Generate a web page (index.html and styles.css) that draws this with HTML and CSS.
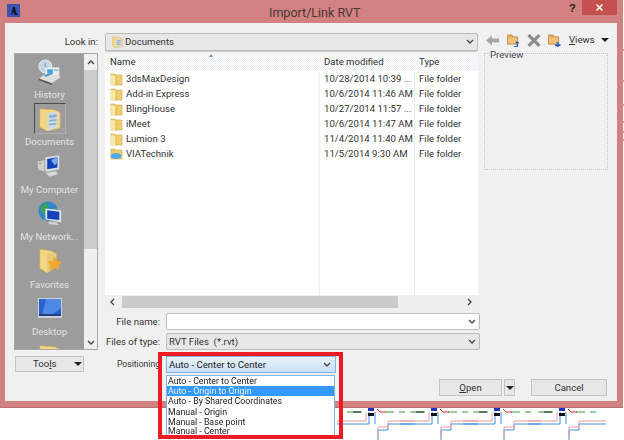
FILE: index.html
```html
<!DOCTYPE html>
<html lang="en">
<head>
<meta charset="utf-8">
<title>Import/Link RVT</title>
<link rel="stylesheet" href="styles.css">
</head>
<body>
<svg class="defs" width="0" height="0">
  <defs>
    <symbol id="folder" viewBox="0 0 13 14">
      <path d="M1 2h4l1 1h6v10H1z" fill="#f0cd6e" stroke="#c9a445" stroke-width=".6"/>
      <path d="M1 3l5 1v9.600L1 13z" fill="#fbe7a6"/>
      <path d="M6 4v9.600" stroke="#d2a94a" stroke-width=".8"/>
    </symbol>
    <symbol id="netfolder" viewBox="0 0 13 14">
      <path d="M1 2h4l1 1h6v9H1z" fill="#f0cd6e" stroke="#c9a445" stroke-width=".6"/>
      <ellipse cx="6" cy="9" rx="5.500" ry="3" fill="#53a9ee"/>
    </symbol>
    <symbol id="docfolder" viewBox="0 0 28 28">
      <path d="M3 3l16 1 6 3v17l-14 3-8-4z" fill="#f3d684" stroke="#c9a445" stroke-width=".6"/>
      <path d="M11 7l12-1v17l-12 4z" fill="#d9d9d0"/>
      <path d="M13 10l8-1v3l-8 1zM13 15l8-1v2l-8 1zM13 19l8-1v2l-8 1z" fill="#7fb4d8"/>
    </symbol>
    <symbol id="favfolder" viewBox="0 0 28 28">
      <path d="M3 1l12 2 6 3v14l-10 7-8-5z" fill="#f3d684" stroke="#c9a445" stroke-width=".6"/>
      <path d="M11 6l9 0v14l-9 7z" fill="#e2c878"/>
      <path d="M19 9l2.500 5 5.500 .8-4 3.800 1 5.400-5-2.600-5 2.600 1-5.400-4-3.800 5.500-.8z" fill="#f0a92a"/>
    </symbol>
    <symbol id="monitor" viewBox="0 0 28 24">
      <path d="M9 2l15-2v15l-15 3z" fill="#d8dde2"/>
      <path d="M11 4l11-2v11l-11 2z" fill="#1140b8"/>
      <path d="M15 5l7-3v6l-3 3z" fill="#7fa8e8"/>
      <path d="M1 7l7-2v12l-7-2z" fill="#cfd3cc"/>
      <path d="M2 8h3v1H2z" fill="#63a650"/>
      <path d="M9 19l11-2 3 3-9 3z" fill="#d7d7d7"/>
    </symbol>
    <symbol id="history" viewBox="0 0 28 28">
      <circle cx="9" cy="8" r="7" fill="#c4d6df" stroke="#e5eef2"/>
      <path d="M9 4v4l3 2" stroke="#7d8f98" fill="none"/>
      <path d="M9 9h15v9H9z" fill="#e8eef0"/>
      <path d="M11 11h6v5h-6z" fill="#4aa3d8"/>
      <path d="M18 11h5v2h-5z" fill="#8cc5e2"/>
      <path d="M2 21l9-6 15 4-10 7z" fill="#dedede"/>
      <path d="M2 21l14 5v2L2 23z" fill="#5a5a5a"/>
      <path d="M7 18l7-3 3 1-7 3z" fill="#3a9ad6"/>
    </symbol>
    <symbol id="network" viewBox="0 0 28 28">
      <circle cx="12" cy="11" r="10.500" fill="#2f86c8"/>
      <path d="M4 6l6-4 3 3-3 4 2 4-3 2-5-4zM15 9l4-2 3 5-3 5-3-3z" fill="#3aa35a"/>
      <path d="M9 8l17 2v13L9 20z" fill="#dfe4e8"/>
      <path d="M11 10l13 1.500v9L11 19z" fill="#1642b8"/>
      <path d="M12 22l9 1 3 3-11-1z" fill="#cfd3d6"/>
    </symbol>
    <symbol id="desktop" viewBox="0 0 24 20">
      <path d="M0 0h24v20H0z" fill="#c9d2db"/>
      <path d="M1 1h22v17H1z" fill="#2a63d0"/>
      <path d="M8 1h15v9l-11 8H4z" fill="#4d8ae6"/>
      <path d="M1 16h22v2H1z" fill="#243f86"/>
    </symbol>
    <symbol id="tbup" viewBox="0 0 14 14">
      <path d="M1 1h5l1 2h5v8H1z" fill="#e2a952" stroke="#a8793a" stroke-width=".6"/>
      <path d="M2 4h9v6H2z" fill="#f0c27c"/>
      <path d="M8 13h3V10H9l2.500-2.500L14 10h-1.500v4H8z" fill="#2a5fc4"/>
    </symbol>
    <symbol id="tbnew" viewBox="0 0 14 14">
      <path d="M1 1h5l1 2h5v8H1z" fill="#e2a952" stroke="#a8793a" stroke-width=".6"/>
      <path d="M2 4h9v6H2z" fill="#f0c27c"/>
      <path d="M10 9h2v2h2v2h-2v1h-2v-1H8v-2h2z" fill="#2a5fc4"/>
    </symbol>
    <symbol id="chev" viewBox="0 0 8 6">
      <path d="M1 1l3 3 3-3" fill="none" stroke="#444" stroke-width="1.300"/>
    </symbol>
  </defs>
</svg>

<div class="page">
  <div class="window">
    <header class="titlebar">
      <svg class="app-icon" viewBox="0 0 13 13"><rect width="13" height="13" fill="#3a55b0"/><path d="M4 11l2-8h2l1 5 2 3H8L6 8l-1 3z" fill="#101830"/></svg>
      <span class="title">Import/Link RVT</span>
      <span class="help">?</span>
      <span class="close"><svg class="close-x" viewBox="0 0 7 7"><path d="M.5 .5l6 6M6.500 .5l-6 6" stroke="#fff" stroke-width="1.500"/></svg></span>
    </header>

    <div class="client">
      <div class="lookin-label">Look in:</div>
      <div class="combo lookin">
        <svg class="combo-icon"><use href="#docfolder"/></svg>
        <span class="combo-text">Documents</span>
        <svg class="chev"><use href="#chev"/></svg>
      </div>
      <div class="toolbar">
        <svg class="tb-icon" viewBox="0 0 14 12"><path d="M0 6l6-5v3h7v4H6v3z" fill="#a6a6a6"/></svg>
        <svg class="tb-icon tb-gap"><use href="#tbup"/></svg>
        <svg class="tb-icon tb-gap2" viewBox="0 0 12 12"><path d="M1 1l10 10M11 1L1 11" stroke="#8c8c8c" stroke-width="3"/></svg>
        <svg class="tb-icon tb-gap"><use href="#tbnew"/></svg>
        <span class="views"><u>V</u>iews</span>
        <span class="caret"></span>
      </div>

      <nav class="sidebar">
        <div class="places">
          <div class="place"><div class="place-icon"><svg class="ico-l"><use href="#history"/></svg></div><span>History</span></div>
          <div class="place"><div class="place-icon selected"><svg class="ico-l"><use href="#docfolder"/></svg></div><span>Documents</span></div>
          <div class="place"><div class="place-icon"><svg class="ico-m"><use href="#monitor"/></svg></div><span>My Computer</span></div>
          <div class="place"><div class="place-icon"><svg class="ico-l"><use href="#network"/></svg></div><span>My Network...</span></div>
          <div class="place"><div class="place-icon"><svg class="ico-l"><use href="#favfolder"/></svg></div><span>Favorites</span></div>
          <div class="place"><div class="place-icon"><svg class="ico-d"><use href="#desktop"/></svg></div><span>Desktop</span></div>
          <div class="place"><div class="place-icon"><svg class="ico-l"><use href="#docfolder"/></svg></div></div>
        </div>
        <div class="vscroll">
          <svg class="chev up"><use href="#chev"/></svg>
          <div class="vthumb"></div>
          <svg class="chev"><use href="#chev"/></svg>
        </div>
      </nav>

      <main class="center">
        <div class="list">
          <div class="row head">
            <span class="c-name">Name</span><span class="c-date">Date modified</span><span class="c-type">Type</span>
            <span class="sort"></span>
          </div>
          <div class="row"><span class="c-name"><svg class="f"><use href="#folder"/></svg>3dsMaxDesign</span><span class="c-date">10/28/2014 10:39 ...</span><span class="c-type">File folder</span></div>
          <div class="row"><span class="c-name"><svg class="f"><use href="#folder"/></svg>Add-in Express</span><span class="c-date">10/6/2014 11:46 AM</span><span class="c-type">File folder</span></div>
          <div class="row"><span class="c-name"><svg class="f"><use href="#folder"/></svg>BlingHouse</span><span class="c-date">10/27/2014 11:57 ...</span><span class="c-type">File folder</span></div>
          <div class="row"><span class="c-name"><svg class="f"><use href="#folder"/></svg>iMeet</span><span class="c-date">10/6/2014 11:47 AM</span><span class="c-type">File folder</span></div>
          <div class="row"><span class="c-name"><svg class="f"><use href="#folder"/></svg>Lumion 3</span><span class="c-date">11/4/2014 11:40 AM</span><span class="c-type">File folder</span></div>
          <div class="row"><span class="c-name"><svg class="f"><use href="#netfolder"/></svg>VIATechnik</span><span class="c-date">11/5/2014 9:30 AM</span><span class="c-type">File folder</span></div>
        </div>
        <div class="hscroll">
          <svg class="chev left"><use href="#chev"/></svg>
          <div class="hthumb"></div>
          <svg class="chev right"><use href="#chev"/></svg>
        </div>
        <div class="field field-name">
          <label>File name:</label>
          <div class="combo white"><span class="combo-text"></span><svg class="chev"><use href="#chev"/></svg></div>
        </div>
        <div class="field field-type">
          <label>Files of type:</label>
          <div class="combo"><span class="combo-text">RVT Files &nbsp;(*.rvt)</span><svg class="chev"><use href="#chev"/></svg></div>
        </div>
      </main>

      <aside class="preview"><span class="preview-label">Preview</span></aside>

      <div class="bottom">
        <div class="tools"><span>Too<u>l</u>s</span><span class="caret"></span></div>
        <label class="pos-label">Positioning</label>
        <div class="pos-combo"><span>Auto - Center to Center</span><svg class="chev"><use href="#chev"/></svg></div>
      </div>

      <div class="actions">
        <div class="btn open"><u>O</u>pen</div>
        <div class="btn split"><span class="caret"></span></div>
        <div class="btn cancel">Cancel</div>
      </div>
    </div>
  </div>

  <svg class="cad" viewBox="0 0 624 32" preserveAspectRatio="none">
    <defs>
      <g id="cad-unit">
        <path d="M2 4h15M40 4h9M54 4h6" stroke="#3a9a3a" fill="none"/>
        <path d="M8 4h8" stroke="#222" fill="none"/>
        <path d="M-8 16H24M24 4V16M30 4V16" stroke="#3f8fe0" fill="none"/>
        <path d="M-8 13H21M21 4V13" stroke="#f09a9a" fill="none"/>
        <path d="M33 32V22H43V16H70" stroke="#3f8fe0" fill="none"/>
        <path d="M33 29V19H43V13H70" stroke="#f09a9a" fill="none"/>
        <path d="M23 0h6v3h-6z" fill="#2030c0"/>
        <path d="M23 5h6v3h-6z" fill="#111"/>
        <path d="M32 1l3 3h6" stroke="#d03030" fill="none"/>
      </g>
    </defs>
    <use href="#cad-unit" x="345"/>
    <use href="#cad-unit" x="408"/>
    <use href="#cad-unit" x="471"/>
    <use href="#cad-unit" x="536"/>
  </svg>

  <svg class="edge-ticks" viewBox="0 0 1 408"><path d="M0 50h1M0 81h1M0 105h1M0 122h1M0 132h1M0 140h1" stroke="#a03030"/></svg>

  <div class="callout">
    <ul class="pos-list">
      <li>Auto - Center to Center</li>
      <li class="sel">Auto - Origin to Origin</li>
      <li>Auto - By Shared Coordinates</li>
      <li>Manual - Origin</li>
      <li>Manual - Base point</li>
      <li>Manual - Center</li>
    </ul>
  </div>
</div>
</body>
</html>
```
FILE: styles.css
```css
* { box-sizing: border-box; }
html, body { margin: 0; padding: 0; background: #fff; overflow: hidden; }
body { width: 624px; height: 440px; font: 9.600px/12px Roboto, "Liberation Sans", Arial, sans-serif; color: #333; }
.defs { position: absolute; }
.page { position: relative; width: 624px; height: 440px; filter: blur(.3px); }

.window { width: 623px; height: 408px; background: #d28181; padding: 0 6px 6px 5px; border-bottom: 1px solid #bb7070; }
.titlebar { height: 23px; display: flex; align-items: flex-start; position: relative; margin-left: -5px; margin-right: -6px; }
.app-icon { width: 13px; height: 13px; margin: 4px 0 0 7px; }
.title { position: absolute; left: 269px; top: 5px; font-size: 12.500px; line-height: 15px; color: #4a3636; }
.help { position: absolute; left: 569px; top: 2px; font: bold 11px/13px "Liberation Sans", sans-serif; color: #2a2020; }
.close { position: absolute; left: 582px; top: 0; width: 35px; height: 15px; background: #c4504f; display: flex; align-items: center; justify-content: center; }
.close-x { width: 7px; height: 7px; }

.client { background: #f0f0f0; height: 378px; display: grid; padding: 10px 0 0 9px;
  grid-template-columns: 84px 375px 128px; grid-template-rows: 18px 297px 29px 1fr; column-gap: 7px; row-gap: 2px; }

.lookin-label { align-self: center; text-align: right; color: #333; }
.combo { display: flex; align-items: center; background: #e6e6e6 repeating-conic-gradient(#ececec 0 25%, #e2e2e2 0 50%) 0 0 / 2px 2px; border: 1px solid #bdbdbd; border-radius: 2px; padding: 0 3px 0 2px; }
.lookin { width: 373px; box-shadow: 0 1px 0 #cfcfcf; }
.combo-icon { width: 13px; height: 14px; margin: 0 1px 0 3px; }
.combo-text { flex: 1; white-space: nowrap; }
.chev { width: 8px; height: 6px; flex: none; }
.chev.up { transform: rotate(180deg); }
.chev.left { transform: rotate(90deg); }
.chev.right { transform: rotate(-90deg); }
.white { background: #fff; }

.toolbar { display: flex; align-items: center; align-self: start; height: 14px; margin-left: -1px; }
.tb-icon { width: 14px; height: 13px; flex: none; }
.tb-gap { margin-left: 6px; }
.tb-gap2 { margin-left: 7px; }
.views { margin-left: 8px; color: #333; }
.caret { display: inline-block; width: 0; height: 0; border: 4px solid transparent; border-top-color: #222; border-bottom-width: 0; flex: none; }
.toolbar .caret { margin-left: 6px; }

.sidebar { grid-column: 1; grid-row: 2 / 3; display: flex; border: 1px solid #a8a8a8; height: 297px; background: #f0f0f0; }
.places { width: 69px; background: #9c9c9c; overflow: hidden; flex: none; }
.place { height: 47.400px; display: flex; flex-direction: column; align-items: center; color: #e3e3e3; }
.place span { height: 12px; line-height: 12px; white-space: nowrap; }
.place-icon { height: 35px; width: 32px; display: flex; align-items: center; justify-content: center; flex: none; }
.place-icon.selected { height: 31px; margin: 2px 0; border: 1px solid #4a4a4a; border-right-color: #b0b0b0; border-bottom-color: #b0b0b0; }
.ico-l { width: 26px; height: 26px; }
.ico-m { width: 26px; height: 23px; }
.ico-d { width: 24px; height: 20px; }
.vscroll { flex: 1; display: flex; flex-direction: column; align-items: center; padding: 5px 0 3px; background: #efefef; }
.vthumb { width: 100%; height: 179px; margin: 5px 0 auto; background: #cdcdcd; }

.center { grid-column: 2; grid-row: 2 / 3; display: flex; flex-direction: column; min-height: 0; }
.list { width: 373px; height: 243px; background: #fff linear-gradient(90deg, transparent 214px, #e5eff8 214px, #e5eff8 215px, transparent 215px, transparent 309px, #e5eff8 309px, #e5eff8 310px, transparent 310px); }
.row { display: flex; height: 15px; line-height: 15px; color: #333; white-space: nowrap; }
.row.head { height: 18px; line-height: 18px; position: relative; background: #f7f9fb repeating-conic-gradient(#fbfcfd 0 25%, #eef1f4 0 50%) 0 0 / 2px 2px; }
.c-name { width: 214px; padding-left: 5px; display: flex; align-items: center; flex: none; }
.c-date { width: 95px; padding-left: 5px; flex: none; }
.c-type { padding-left: 5px; }
.f { width: 13px; height: 14px; margin-right: 3px; flex: none; }
.sort { position: absolute; left: 104px; top: 1px; width: 0; height: 0; border: 2px solid transparent; border-top-width: 0; border-bottom: 3px solid #6a9ac0; }

.hscroll { width: 375px; height: 13px; display: flex; align-items: center; padding: 0 6px 0 3px; background: #efefef; }
.hthumb { width: 276px; height: 12px; margin: 0 auto 0 6px; background: #cbcbcb; }
.field { display: flex; }
.field label { width: 55px; margin-right: 6px; text-align: right; align-self: center; white-space: nowrap; flex: none; }
.field .combo { width: 314px; height: 17px; }
.field-name { margin-top: 5px; }
.field-type { margin-top: 3px; }

.preview { grid-column: 3; grid-row: 2 / 3; margin-left: -3px; width: 124px; height: 117px; border: 1px dotted #c4c4c4; position: relative; }
.preview-label { position: absolute; left: 5px; top: -5px; background: #f0f0f0; padding-right: 1px; color: #445; }

.bottom { grid-column: 1 / 3; grid-row: 3; display: flex; align-items: flex-start; padding-top: 4px; }
.tools { width: 69px; height: 16px; margin-left: 1px; display: flex; align-items: center; justify-content: space-between; padding: 0 1px 0 17px; border: 1px solid #c4c4c4; background: #e6e6e6 repeating-conic-gradient(#ececec 0 25%, #e2e2e2 0 50%) 0 0 / 2px 2px; }
.pos-label { margin-left: 33px; width: 49px; line-height: 16px; font-size: 8.600px; white-space: nowrap; }
.pos-combo { display: flex; align-items: center; justify-content: space-between; width: 170px; height: 17px; padding: 0 4px 0 2px; border: 1px solid #7eb4ea; background: linear-gradient(#eaf3fc, #c9e0f7); color: #222; z-index: 2; }

.actions { grid-column: 1 / 4; grid-row: 4; display: flex; padding-left: 425px; margin-top: -4px; }
.btn { height: 17px; border: 1px solid #c4c4c4; background: #e6e6e6 repeating-conic-gradient(#ececec 0 25%, #e2e2e2 0 50%) 0 0 / 2px 2px; text-align: center; line-height: 15px; color: #333; }
.open { width: 63px; }
.split { width: 11px; margin-left: 2px; display: flex; align-items: center; justify-content: center; }
.cancel { width: 76px; margin-left: 16px; }

.cad { display: block; width: 624px; height: 32px; }
.edge-ticks { position: absolute; left: 623px; top: 0; width: 1px; height: 408px; }

.callout { position: absolute; left: 158px; top: 352px; width: 185px; height: 87px; border: 4px solid #ed1c24; z-index: 1; padding: 19px 0 0 4px; }
.pos-list { list-style: none; margin: 0; padding: 0; width: 169px; height: 60px; overflow: hidden; background: #fff; border: 1px solid #7eb4ea; border-bottom: 0; color: #222; font-size: 8.800px; line-height: 8px; }
.pos-list li { height: 10.200px; padding: 1px 0 0 1px; white-space: nowrap; }
.pos-list li:last-child { height: 8px; padding-top: 0; }
.pos-list .sel { background: #3399ff; color: #e8f3ff; }
```
